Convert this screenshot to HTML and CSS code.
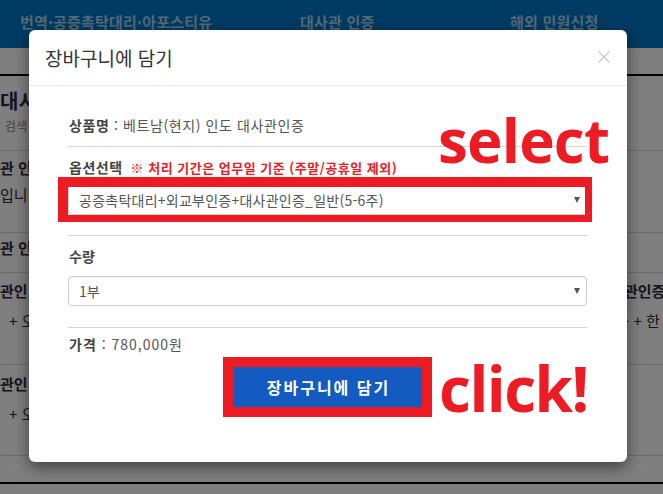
FILE: index.html
```html
<!DOCTYPE html>
<html lang="ko">
<head>
<meta charset="utf-8">
<title>장바구니에 담기</title>
<link rel="stylesheet" href="styles.css">
</head>
<body>
<div class="page">
  <header class="top">
    <nav class="nav">
      <span>번역·공증촉탁대리·아포스티유</span>
      <span>대사관 인증</span>
      <span>해외 민원신청</span>
    </nav>
  </header>
  <div class="subbar"></div>
  <div class="list">
    <div class="lrow r1">
      <div class="lcell"><div class="big">대시</div><div class="small">검색</div></div>
      <div class="rcell"></div>
    </div>
    <div class="lrow r2">
      <div class="lcell"><div class="bold">관 인</div><div class="reg gap7">입니</div></div>
      <div class="rcell"></div>
    </div>
    <div class="lrow r3">
      <div class="lcell"><div class="bold">관 인</div></div>
      <div class="rcell"></div>
    </div>
    <div class="lrow r4">
      <div class="lcell"><div class="bold">관인</div><div class="reg sub">+ 오</div></div>
      <div class="rcell"><div class="bold">관인증</div><div class="reg sub2">- + 한</div></div>
    </div>
    <div class="lrow r5">
      <div class="lcell"><div class="bold">관인</div><div class="reg sub">+ 오</div></div>
      <div class="rcell"></div>
    </div>
    <div class="lrow r6"></div>
  </div>
</div>
<div class="overlay"></div>
<div class="modal">
  <div class="modal-header">
    <h4 class="modal-title">장바구니에 담기</h4>
    <span class="close"><svg width="12" height="12" viewBox="0 0 12 12"><path d="M0.5 0.5L11.5 11.5M11.5 0.5L0.5 11.5" stroke="#c9c9c9" stroke-width="1.3" fill="none"/></svg></span>
  </div>
  <div class="modal-body">
    <div class="frow product"><b>상품명</b> : 베트남(현지) 인도 대사관인증</div>
    <div class="frow option">
      <div class="label"><b class="lb">옵션선택</b><span class="note">※ 처리 기간은 업무일 기준 (주말/공휴일 제외)</span></div>
      <div class="select-wrap">
        <div class="select first"><span>공증촉탁대리+외교부인증+대사관인증_일반(5-6주)</span><i class="caret"></i></div>
        <div class="frame"></div>
      </div>
    </div>
    <div class="frow qty">
      <div class="label"><b>수량</b></div>
      <div class="select second"><span>1부</span><i class="caret"></i></div>
    </div>
    <div class="price"><b>가격</b> : 780,000원</div>
    <div class="btn-area">
      <div class="btn-frame"><button class="btn">장바구니에 담기</button></div>
    </div>
    <span class="anno anno-select">select</span>
    <span class="anno anno-click">click!</span>
  </div>
</div>
</body>
</html>
```
FILE: styles.css
```css
* { box-sizing: border-box; }
html, body { margin: 0; padding: 0; }
body {
  width: 663px;
  height: 494px;
  overflow: hidden;
  position: relative;
  background: #fff;
  font-family: "Noto Sans CJK KR", "Noto Sans", sans-serif;
}
.page { width: 663px; }
.top {
  height: 48px;
  background: #0077c6;
}
.nav {
  display: grid;
  grid-template-columns: 280px 210px auto;
  padding-left: 20px;
  padding-top: 12px;
  color: #a8d2f2;
  font-weight: 700;
  font-size: 15px;
  line-height: 20px;
  letter-spacing: 0.2px;
}
.subbar {
  height: 28px;
  border-bottom: 2px solid #000;
}
.lrow {
  display: grid;
  grid-template-columns: 624px 1fr;
  border-bottom: 1px solid #d6d6d6;
  color: #2a2a40;
  font-size: 15px;
  line-height: 20px;
}
.lcell, .rcell { overflow: hidden; white-space: nowrap; }
.r1 { height: 75px; padding-top: 13px; }
.r2 { height: 82px; padding-top: 7px; }
.r3 { height: 40px; padding-top: 5px; }
.r4 { height: 92px; padding-top: 8px; }
.r5 { height: 91px; padding-top: 9px; }
.r6 { height: 28px; border-bottom: 2px solid #000; }
.big { font-size: 20px; font-weight: 700; line-height: 24px; }
.small { font-size: 12px; line-height: 16px; color: #888; padding-left: 5px; margin-top: 5px; }
.bold { font-weight: 700; }
.reg { font-weight: 400; }
.gap7 { margin-top: 7px; }
.sub { margin-top: 10px; padding-left: 9px; }
.sub2 { margin-top: 10px; }
.overlay {
  position: absolute;
  inset: 0;
  background: rgba(0, 0, 0, 0.5);
}
.modal {
  position: absolute;
  top: 30px;
  left: 29px;
  width: 598px;
  height: 432px;
  background: #fff;
  border-radius: 6px;
  box-shadow: 0 5px 15px rgba(0, 0, 0, 0.5);
}
.modal-header {
  height: 56px;
  padding: 0 17px 0 16px;
  border-bottom: 1px solid #e5e5e5;
  display: flex;
  align-items: center;
  justify-content: space-between;
}
.modal-title {
  margin: 0;
  font-size: 19px;
  font-weight: 400;
  line-height: 26px;
  color: #333;
}
.close { display: flex; width: 12px; height: 12px; margin-top: -2px; }
.modal-body {
  position: relative;
  padding: 19px 40px 0 39px;
  font-size: 14px;
  line-height: 20px;
  color: #555;
}
.modal-body b { color: #444; font-weight: 700; }
.frow { border-bottom: 1px solid #d4d4d4; }
.product { padding: 10px 0 11px 1px; letter-spacing: 0.6px; }
.option { padding: 10px 0 20px; }
.qty { padding: 10px 0 21px; }
.label { display: flex; align-items: baseline; padding-left: 1px; }
.lb { letter-spacing: 0.5px; }
.note {
  margin-left: 8px;
  color: #ea1c24;
  font-weight: 700;
  font-size: 13px;
  letter-spacing: 0.5px;
}
.select-wrap { position: relative; margin-top: 7px; }
.select {
  height: 30px;
  border: 1px solid #ccc;
  border-radius: 4px;
  display: flex;
  align-items: center;
  justify-content: space-between;
  padding: 0 6px 0 10px;
  color: #555;
  font-size: 14px;
  box-shadow: inset 0 1px 1px rgba(0, 0, 0, 0.06);
}
.first { letter-spacing: 0.25px; }
.second { margin-top: 10px; }
.caret {
  width: 0;
  height: 0;
  border-left: 3.5px solid transparent;
  border-right: 3.5px solid transparent;
  border-top: 6px solid #555;
}
.frame {
  position: absolute;
  left: -10px;
  top: -8px;
  right: -5px;
  bottom: -7px;
  border-style: solid;
  border-color: #ed1c24;
  border-width: 10px 7px 7px 10px;
}
.price { padding: 6px 0 0 1px; letter-spacing: 1px; }
.btn-area {
  display: flex;
  justify-content: center;
  margin-top: 3px;
}
.btn-frame { border: 10px solid #ed1c24; }
.btn {
  display: block;
  width: 189px;
  height: 40px;
  border: 0;
  margin: 0;
  padding: 0 0 0 2px;
  background: #135bc0;
  color: #fff;
  font-family: "Noto Sans CJK KR", "Noto Sans", sans-serif;
  font-size: 16px;
  font-weight: 700;
  letter-spacing: 2px;
}
.anno {
  position: absolute;
  font-family: "Open Sans", "Noto Sans", sans-serif;
  font-weight: 700;
  color: #ed1c24;
  white-space: nowrap;
}
.anno-select {
  left: 409px;
  top: 24px;
  font-size: 60px;
  line-height: 60px;
  letter-spacing: -0.8px;
}
.anno-click {
  left: 410px;
  top: 271px;
  font-size: 62px;
  line-height: 62px;
  letter-spacing: -1.5px;
}
```
